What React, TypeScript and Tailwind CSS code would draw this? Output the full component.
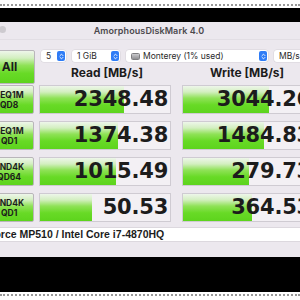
import { ChevronsUpDown } from "lucide-react";

const rows = [
  { l1: "SEQ1M", l2: "QD8", read: "2348.48", rw: 84, write: "3044.26", ww: 86 },
  { l1: "SEQ1M", l2: "QD1", read: "1374.38", rw: 78, write: "1484.83", ww: 81 },
  { l1: "RND4K", l2: "QD64", read: "1015.49", rw: 76, write: "279.73", ww: 66 },
  { l1: "RND4K", l2: "QD1", read: "50.53", rw: 52, write: "364.53", ww: 69 },
];

const green =
  "bg-[linear-gradient(to_bottom,#eef6ea_0%,#d3efc0_22%,#8fe257_45%,#68da26_70%,#5dd41d_100%)]";

function Stepper() {
  return (
    <div className="w-[8px] h-[10px] rounded-[2px] bg-[#2f7cf6] flex items-center justify-center shrink-0">
      <ChevronsUpDown className="w-[7px] h-[7px] text-white" strokeWidth={3} />
    </div>
  );
}

function Select({ w, children, stepper = true }: { w: string; children: React.ReactNode; stepper?: boolean }) {
  return (
    <div
      className={`${w} h-[12px] bg-white rounded-[3px] shadow-[0_0_0_0.5px_#d6d2d8] flex items-center pl-[5px] pr-[1px] shrink-0`}
    >
      <div className="flex-1 flex items-center gap-[3px] text-[8.5px] leading-none text-[#2a2a2a] whitespace-nowrap">
        {children}
      </div>
      {stepper && <Stepper />}
    </div>
  );
}

function Cell({ value, pct }: { value: string; pct: number }) {
  return (
    <div className="relative w-[134px] h-[29px] border border-[#cfcbd2] bg-[#f3f0f4] flex items-center justify-end pr-[2px]">
      <div className={`absolute left-0 top-0 bottom-0 ${green}`} style={{ width: `${pct}px` }} />
      <span className="relative font-['DejaVu_Sans',sans-serif] font-bold text-[21px] leading-none text-[#1c1c1c] tracking-[-0.2px]">
        {value}
      </span>
    </div>
  );
}

export default function App() {
  return (
    <div className="w-[300px] h-[300px] overflow-hidden bg-black flex flex-col font-['Inter',sans-serif]">
      <div className="h-[8px] bg-white shrink-0 pt-[4px]">
        <div className="border-t-2 border-dotted border-[#555] opacity-60" />
      </div>
      <div className="h-[14px] shrink-0" />

      {/* window */}
      <div className="ml-[-28px] w-[354px] h-[235px] shrink-0 bg-[#ece8ee] flex flex-col">
        <div className="h-[18px] relative flex items-center justify-center border-b border-[#e2dee4]">
          <div className="absolute left-[4px] top-[4px] flex gap-[4.5px]">
            <div className="w-[7px] h-[7px] rounded-full bg-[#cdcacf]" />
            <div className="w-[7px] h-[7px] rounded-full bg-[#cdcacf]" />
            <div className="w-[7px] h-[7px] rounded-full bg-[#cdcacf]" />
          </div>
          <span className="text-[9px] font-semibold text-[#4b484d] tracking-[0.1px]">AmorphousDiskMark 4.0</span>
        </div>

        <div className="px-[12px] pt-[10px] flex flex-col">
          <div className="flex gap-[5px]">
            <div
              className={`w-[51px] h-[34px] border border-[#b9b6ba] rounded-[2px] ${green} flex items-center justify-center text-[12px] font-bold text-[#1c1c1c]`}
            >
              All
            </div>
            <div className="flex flex-col">
              <div className="flex gap-[6px] pl-[1px]">
                <Select w="w-[25px]">5</Select>
                <Select w="w-[48px]">1 GiB</Select>
                <Select w="w-[142px]">
                  <div className="w-[9px] h-[7px] rounded-[1.5px] bg-[linear-gradient(to_bottom,#c9c9cc,#8e8e92)] border border-[#7d7d80]" />
                  <span>Monterey (1% used)</span>
                </Select>
                <Select w="w-[40px]" stepper={false}>MB/s</Select>
              </div>
              <div className="flex gap-[6px] h-[22px] items-center">
                <div className="w-[134px] text-center text-[12px] font-bold text-[#1c1c1c]">Read [MB/s]</div>
                <div className="w-[134px] text-center text-[12px] font-bold text-[#1c1c1c]">Write [MB/s]</div>
              </div>
            </div>
          </div>

          <div className="flex flex-col gap-[7px] mt-[1px]">
            {rows.map((r) => (
              <div key={r.l1 + r.l2} className="flex gap-[5px]">
                <div
                  className={`w-[51px] h-[29px] border border-[#b9b6ba] rounded-[2px] ${green} flex flex-col items-center justify-center text-[8.5px] leading-[10px] font-bold text-[#1c1c1c]`}
                >
                  <span>{r.l1}</span>
                  <span>{r.l2}</span>
                </div>
                <Cell value={r.read} pct={r.rw} />
                <div className="w-[1px]" />
                <Cell value={r.write} pct={r.ww} />
              </div>
            ))}
          </div>

          <div className="mt-[5px] h-[15px] bg-white border border-[#dcd8de] flex items-center pl-[3px]">
            <span className="font-['Liberation_Sans',sans-serif] text-[10.5px] font-semibold text-[#1c1c1c] whitespace-nowrap">
              Force MP510 / Intel Core i7-4870HQ
            </span>
          </div>
        </div>
      </div>

      <div className="flex-1" />
      <div className="h-[8px] bg-white shrink-0 pt-[2px]">
        <div className="border-t-2 border-dotted border-[#555] opacity-60" />
      </div>
    </div>
  );
}
